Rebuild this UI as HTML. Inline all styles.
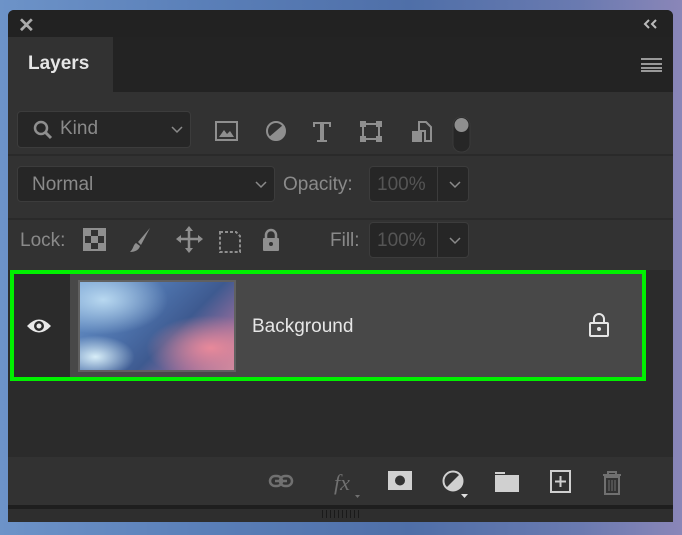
<!DOCTYPE html>
<html><head><style>
*{margin:0;padding:0;box-sizing:border-box}
body{width:682px;height:535px;overflow:hidden;position:relative;font-family:"Liberation Sans",sans-serif;
background:linear-gradient(90deg,#6d93c8 0%,#5a7fb8 30%,#4f6fa8 60%,#6a7ab0 85%,#8a86b8 100%)}
.p{position:absolute;left:8px;top:10px;width:665px;height:512px;background:#323232;border-radius:6px 6px 0 0;overflow:hidden}
.a{position:absolute}
.t{color:#8a8a8a;font-size:19px}
.box{position:absolute;background:#262626;border:1px solid #3c3c3c;border-radius:4px}
.g{fill:#8f8f8f}
</style></head><body>
<div class="p">
 <div class="a" style="left:0;top:0;width:665px;height:27px;background:#222"></div>
 <div class="a" style="left:10px;top:3px;color:#aaa;font-size:20px;font-weight:bold">✕</div>
 <svg class="a" style="left:634px;top:8px" width="18" height="12"><path d="M7 2L3 6l4 4M14 2l-4 4 4 4" fill="none" stroke="#bbb" stroke-width="2"/></svg>
 <div class="a" style="left:0;top:27px;width:665px;height:55px;background:#232323"></div>
 <div class="a" style="left:0;top:27px;width:105px;height:56px;background:#323232"></div>
 <div class="a" style="left:20px;top:43px;color:#e6e6e6;font-size:19px;font-weight:bold">Layers</div>
 <div class="a" style="left:633px;top:48px;width:21px;height:14px;border-top:2px solid #999;border-bottom:2px solid #999"><div style="margin-top:3px;height:2px;background:#999"></div><div style="margin-top:2px;height:2px;background:#999"></div></div>
 <!-- filter row -->
 <div class="box" style="left:9px;top:101px;width:174px;height:37px"></div>
 <svg class="a" style="left:24px;top:109px" width="22" height="22"><circle cx="9" cy="9" r="6" fill="none" stroke="#8f8f8f" stroke-width="2.5"/><path d="M13 13l6 6" stroke="#8f8f8f" stroke-width="3"/></svg>
 <div class="a t" style="left:52px;top:108px">Kind</div>
 <svg class="a" style="left:162px;top:115px" width="14" height="10"><path d="M2 2l5 5 5-5" fill="none" stroke="#8a8a8a" stroke-width="1.5"/></svg>
 <svg class="a" style="left:205px;top:105px" width="270" height="40">
  <rect x="3" y="7" width="21" height="18" fill="none" stroke="#8f8f8f" stroke-width="2"/><path d="M6 22l5-7 3 4 3-3 4 6z" class="g"/>
  <circle cx="63" cy="16" r="9" fill="none" stroke="#8f8f8f" stroke-width="2"/><path d="M56 22L70 10A9 9 0 0 1 56 22z" class="g"/>
  <path d="M100 7h18v5h-2v-3h-5v16h3v2h-10v-2h3v-16h-5v3h-2z" class="g"/>
  <rect x="150" y="9" width="16" height="15" fill="none" stroke="#8f8f8f" stroke-width="2"/><g class="g"><rect x="147" y="6" width="6" height="6"/><rect x="163" y="6" width="6" height="6"/><rect x="147" y="21" width="6" height="6"/><rect x="163" y="21" width="6" height="6"/></g>
  <path d="M206 7h7l5 5v14h-6v-10h-6z" fill="none" stroke="#8f8f8f" stroke-width="2"/><rect x="199" y="16" width="10" height="11" class="g"/>
  <rect x="240" y="2" width="17" height="35" rx="8" fill="#262626" stroke="#3a3a3a"/><circle cx="248.5" cy="10" r="7" fill="#8f8f8f"/>
 </svg>
 <div class="a" style="left:0;top:144px;width:665px;height:2px;background:#2a2a2a"></div>
 <!-- blend row -->
 <div class="box" style="left:9px;top:156px;width:258px;height:36px"></div>
 <div class="a t" style="left:24px;top:164px">Normal</div>
 <svg class="a" style="left:246px;top:170px" width="14" height="10"><path d="M2 2l5 5 5-5" fill="none" stroke="#8a8a8a" stroke-width="1.5"/></svg>
 <div class="a t" style="left:275px;top:164px">Opacity:</div>
 <div class="box" style="left:361px;top:156px;width:100px;height:36px"><div style="position:absolute;left:67px;top:0;width:1px;height:34px;background:#3c3c3c"></div></div>
 <div class="a" style="left:369px;top:164px;color:#555;font-size:19px">100%</div>
 <svg class="a" style="left:440px;top:170px" width="14" height="10"><path d="M2 2l5 5 5-5" fill="none" stroke="#8a8a8a" stroke-width="1.5"/></svg>
 <div class="a" style="left:0;top:208px;width:665px;height:2px;background:#2a2a2a"></div>
 <!-- lock row -->
 <div class="a t" style="left:12px;top:220px">Lock:</div>
 <svg class="a" style="left:74px;top:216px" width="210" height="30">
  <rect x="2" y="3" width="21" height="21" fill="none" stroke="#8f8f8f" stroke-width="2"/><g class="g"><rect x="2" y="3" width="7" height="7"/><rect x="16" y="3" width="7" height="7"/><rect x="9" y="10" width="7" height="7"/><rect x="2" y="17" width="7" height="7"/><rect x="16" y="17" width="7" height="7"/></g>
  <path d="M68 2L56 16l3 3z" class="g"/><path d="M54 17c-3 2-2 5-6 9 5 0 9-2 10-6z" class="g"/>
  <path d="M107 2v23M96 13h23" stroke="#8f8f8f" stroke-width="2.5"/><path d="M107 0l-4 5h8zM107 27l-4-5h8zM94 13l5-4v8zM121 13l-5-4v8z" class="g"/>
  <path d="M138 6h16l4 4v16h-20z" fill="none" stroke="#8f8f8f" stroke-width="2" stroke-dasharray="3 2"/>
  <path d="M184 12v-3a5 5 0 0 1 10 0v3" fill="none" stroke="#8f8f8f" stroke-width="2.5"/><rect x="181" y="12" width="16" height="13" rx="1" class="g"/><circle cx="189" cy="18" r="2" fill="#323232"/>
 </svg>
 <div class="a t" style="left:322px;top:220px">Fill:</div>
 <div class="box" style="left:361px;top:212px;width:100px;height:36px"><div style="position:absolute;left:67px;top:0;width:1px;height:34px;background:#3c3c3c"></div></div>
 <div class="a" style="left:369px;top:220px;color:#555;font-size:19px">100%</div>
 <svg class="a" style="left:440px;top:226px" width="14" height="10"><path d="M2 2l5 5 5-5" fill="none" stroke="#8a8a8a" stroke-width="1.5"/></svg>
 <!-- layers list -->
 <div class="a" style="left:0;top:260px;width:665px;height:187px;background:#2b2b2b"></div>
 <div class="a" style="left:62px;top:264px;width:575px;height:106px;background:#484848"></div>
 <div class="a" style="left:2px;top:260px;width:636px;height:111px;border:4px solid #00f000"></div>
 <svg class="a" style="left:18px;top:306px" width="28" height="20"><path d="M1 10Q13 -3 25 10Q13 23 1 10z" fill="#e8e8e8"/><circle cx="13" cy="10" r="5" fill="#2b2b2b"/><circle cx="13" cy="10" r="2.5" fill="#e8e8e8"/></svg>
 <div class="a" style="left:70px;top:270px;width:158px;height:92px;background:#606060;padding:2px">
  <div style="width:100%;height:100%;background:radial-gradient(ellipse at 15% 20%,#b8d8f0 0,transparent 35%),radial-gradient(ellipse at 85% 75%,#e8899a 0,transparent 35%),radial-gradient(ellipse at 10% 85%,#d8eef8 0,transparent 20%),linear-gradient(135deg,#6d9ad0 0%,#4b6fa8 40%,#3e5a90 60%,#8a6a9a 80%,#c88aa0 100%)"></div></div>
 <div class="a" style="left:244px;top:306px;color:#e6e6e6;font-size:19px">Background</div>
 <svg class="a" style="left:580px;top:302px" width="22" height="26"><path d="M6 11V7a5 5 0 0 1 10 0v4" fill="none" stroke="#e6e6e6" stroke-width="2"/><rect x="2" y="11" width="18" height="13" rx="1" fill="none" stroke="#e6e6e6" stroke-width="2"/><circle cx="11" cy="17" r="2" fill="#e6e6e6"/></svg>
 <!-- bottom bar -->
 <div class="a" style="left:0;top:447px;width:665px;height:48px;background:#323232"></div>
 <svg class="a" style="left:255px;top:455px" width="360" height="36">
  <rect x="7" y="11" width="12" height="10" rx="5" fill="none" stroke="#707070" stroke-width="2.5"/><rect x="17" y="11" width="12" height="10" rx="5" fill="none" stroke="#707070" stroke-width="2.5"/><path d="M12 16h12" stroke="#707070" stroke-width="2.5"/>
  <text x="71" y="25" fill="#707070" font-size="22" font-style="italic" font-family="Liberation Serif">fx</text><path d="M92 30h5l-2.5 3z" fill="#707070"/>
  <rect x="125" y="6" width="24" height="19" fill="#d0d0d0"/><circle cx="137" cy="15.5" r="5" fill="#323232"/>
  <circle cx="190" cy="16" r="9.5" fill="none" stroke="#d0d0d0" stroke-width="2"/><path d="M183 23L197 9A9.5 9.5 0 0 1 183 23z" fill="#d0d0d0"/><path d="M198 29h7l-3.5 4z" fill="#e0e0e0"/>
  <rect x="232" y="10" width="24" height="17" fill="#d0d0d0"/><rect x="232" y="7" width="10" height="2" fill="#d0d0d0"/>
  <rect x="288" y="6" width="19" height="21" fill="none" stroke="#d0d0d0" stroke-width="2"/><path d="M297.5 11v11M292 16.5h11" stroke="#d0d0d0" stroke-width="2"/>
  <path d="M340 10h18M345 10V7h8v3" fill="none" stroke="#707070" stroke-width="2"/><rect x="342" y="12" width="14" height="17" fill="none" stroke="#707070" stroke-width="2"/><path d="M346 15v11M349 15v11M352 15v11" stroke="#707070"/>
 </svg>
 <div class="a" style="left:0;top:495px;width:665px;height:4px;background:#1e1e1e"></div>
 <div class="a" style="left:0;top:499px;width:665px;height:13px;background:#2e2e2e"></div>
 <div class="a" style="left:314px;top:500px;width:38px;height:8px;background:repeating-linear-gradient(90deg,#1a1a1a 0 1px,transparent 1px 4px)"></div>
</div>
</body></html>
